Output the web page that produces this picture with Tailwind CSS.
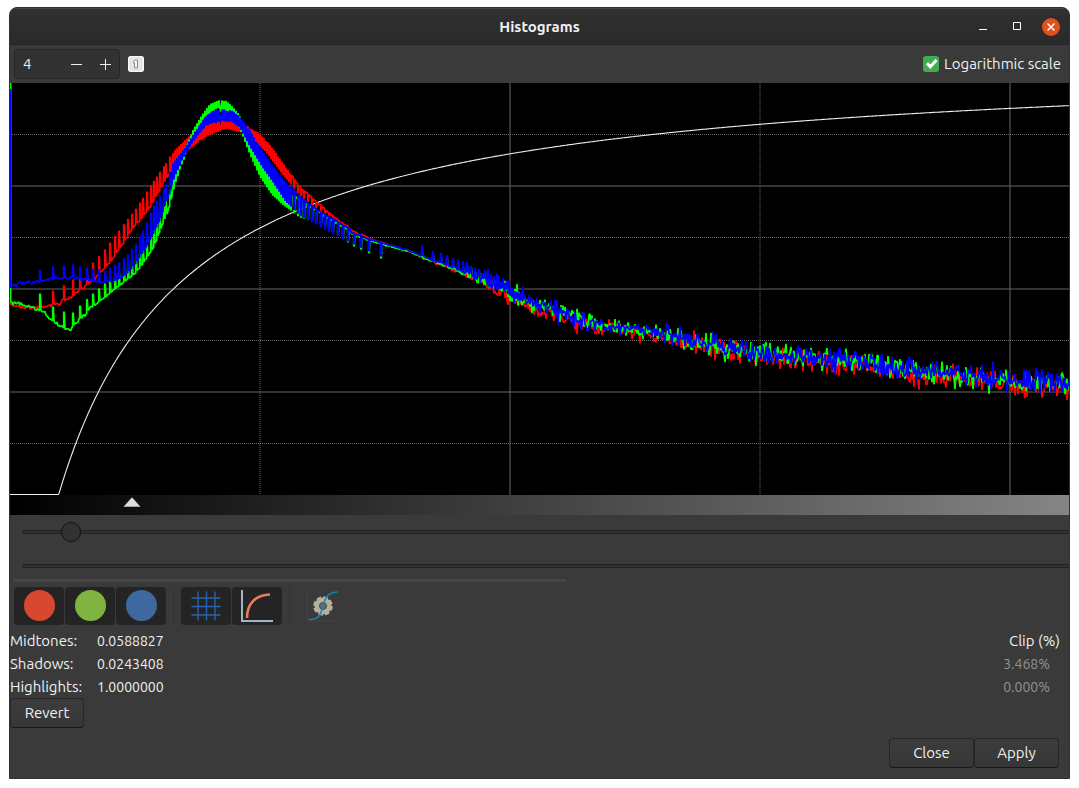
<!DOCTYPE html>
<html lang="en">
<head>
<meta charset="utf-8">
<meta name="viewport" content="width=device-width, initial-scale=1">
<title>Histograms</title>
<script src="https://cdn.jsdelivr.net/npm/@tailwindcss/browser@4"></script>
</head>
<body class="bg-white px-[9px] pt-[7px] pb-[9px] text-[15px] text-[#f0f0f0] font-['Ubuntu','Noto_Sans',sans-serif]">
<main class="flex min-h-[772px] flex-col overflow-hidden rounded-t-lg border border-[#303030] bg-[#3a3a3a]">
  <header class="grid h-[37px] shrink-0 grid-cols-[1fr_auto_1fr] items-center border-t border-b border-t-[#484848] border-b-[#232323] bg-linear-to-b from-[#303030] to-[#2a2a2a]">
    <h1 class="col-start-2 pt-0.5 font-bold">Histograms</h1>
    <div class="flex items-center justify-end gap-4 pr-[9px]">
      <button aria-label="Minimize" class="flex size-[18px] items-center justify-center"><svg class="size-4" viewBox="0 0 16 16"><path d="M4 10h8v1H4z" fill="#fff"/></svg></button>
      <button aria-label="Maximize" class="flex size-[18px] items-center justify-center"><svg class="size-4" viewBox="0 0 16 16" fill="none" stroke="#fff"><path d="M4.500 3.500h7v7h-7z"/></svg></button>
      <button aria-label="Close window" class="flex size-[18px] items-center justify-center rounded-full bg-[#e2501e]"><svg class="size-4" viewBox="0 0 16 16" fill="none" stroke="#fff" stroke-width="1.500"><path d="M4.500 4.500l7 7m0-7l-7 7"/></svg></button>
    </div>
  </header>

  <div class="flex h-[38px] shrink-0 items-center justify-between pr-2 pl-1">
    <div class="flex items-center gap-2">
      <div class="flex h-[30px] overflow-hidden rounded border border-[#272727] bg-[#323232]">
        <input aria-label="Zoom" value="4" class="w-[46px] bg-transparent pl-2 outline-none">
        <button aria-label="Zoom out" class="flex w-[29px] items-center justify-center border-l border-[#2d2d2d]"><svg class="h-3 w-[11px]" viewBox="0 0 11 12"><path d="M0 6h11v1H0z" fill="#eee"/></svg></button>
        <button aria-label="Zoom in" class="flex w-[29px] items-center justify-center border-l border-[#2d2d2d]"><svg class="h-3 w-[11px]" viewBox="0 0 11 12"><path d="M0 6h11v1H0zM5 1h1v11H5z" fill="#eee"/></svg></button>
      </div>
      <button aria-label="Reset zoom" class="size-4 rounded-[3px] bg-[#e4e4e2]"><svg class="size-4" viewBox="0 0 16 16"><rect x=".5" y=".5" width="15" height="15" rx="2.500" fill="#e6e6e4" stroke="#fafafa"/><path d="M5.500 5.500l1.500-1.500h2.500v8h-3v-5h-1z" fill="#f4f4f2" stroke="#8b8b88"/></svg></button>
    </div>
    <label class="flex items-center gap-[5px]">
      <span class="grid size-4">
        <input type="checkbox" checked class="col-start-1 row-start-1 size-4 appearance-none rounded-[3px] bg-[#3fae4f]">
        <svg class="pointer-events-none col-start-1 row-start-1 size-4" viewBox="0 0 16 16" fill="none" stroke="#fff" stroke-width="3"><path d="M4 7.200l3.300 3.600L13.500 4"/></svg>
      </span>
      Logarithmic scale
    </label>
  </div>

  <svg class="block h-[412px] w-full shrink-0 bg-black" viewBox="0 0 1059 412" preserveAspectRatio="none" role="img" aria-label="RGB histogram with the transfer curve" fill="none">
    <path stroke="#666" d="M500 0V412M1000 0V412M0 103H1059M0 206H1059M0 309H1059"/>
    <path stroke="#6a6a6a" stroke-dasharray="1 1" d="M250 0V412M750 0V412"/>
    <path stroke="#6a6a6a" stroke-dasharray="1 1" d="M0 51.500H1059M0 154.500H1059M0 257.500H1059M0 360.500H1059"/>
    <path id="transfer" stroke="#f0f0f0" stroke-width="1.100"/>
    <path id="red" stroke="#f00" stroke-width="1.700" stroke-linejoin="bevel"/>
    <path id="green" stroke="#0f0" stroke-width="1.700" stroke-linejoin="bevel"/>
    <path id="blue" stroke="#00f" stroke-width="1.700" stroke-linejoin="bevel"/>
  </svg>

  <div class="h-5 w-full shrink-0 bg-linear-to-r/srgb from-black to-[#858585] pl-[113px]">
    <svg class="h-[14px] w-[18px]" viewBox="0 0 18 14"><path d="M9 2l9 10H0z" fill="#dedede" stroke="#111" stroke-width=".6"/></svg>
  </div>

  <div class="flex shrink-0 flex-col overflow-hidden pl-3">
    <input type="range" aria-label="Shadows" min="0" max="1" step="any" value="0.0195" class="h-[34px] w-[190%] appearance-none bg-transparent [&::-webkit-slider-runnable-track]:h-1 [&::-webkit-slider-runnable-track]:rounded-sm [&::-webkit-slider-runnable-track]:border [&::-webkit-slider-runnable-track]:border-[#232323] [&::-webkit-slider-runnable-track]:bg-[#303030] [&::-webkit-slider-thumb]:-mt-[9px] [&::-webkit-slider-thumb]:size-5 [&::-webkit-slider-thumb]:appearance-none [&::-webkit-slider-thumb]:rounded-full [&::-webkit-slider-thumb]:border [&::-webkit-slider-thumb]:border-[#101010] [&::-webkit-slider-thumb]:bg-[#323232]">
    <input type="range" aria-label="Highlights" min="0" max="1" step="any" value="1" class="h-[34px] w-[190%] appearance-none bg-transparent [&::-webkit-slider-runnable-track]:h-1 [&::-webkit-slider-runnable-track]:rounded-sm [&::-webkit-slider-runnable-track]:border [&::-webkit-slider-runnable-track]:border-[#232323] [&::-webkit-slider-runnable-track]:bg-[#303030] [&::-webkit-slider-thumb]:-mt-[9px] [&::-webkit-slider-thumb]:size-5 [&::-webkit-slider-thumb]:appearance-none [&::-webkit-slider-thumb]:rounded-full [&::-webkit-slider-thumb]:bg-[#323232]">
  </div>
  <div class="-mt-1 ml-[3px] h-[3px] w-[52.200%] shrink-0 rounded-full bg-[#474747]"></div>

  <div class="mt-1 ml-1 flex h-[39px] shrink-0 items-center gap-px">
    <button aria-label="Red channel" aria-pressed="true" class="flex h-[38px] w-[50px] items-center justify-center rounded bg-[#242424]"><span class="size-[31px] rounded-full bg-[#d8472f]"></span></button>
    <button aria-label="Green channel" aria-pressed="true" class="flex h-[38px] w-[50px] items-center justify-center rounded bg-[#242424]"><span class="size-[31px] rounded-full bg-[#80b441]"></span></button>
    <button aria-label="Blue channel" aria-pressed="true" class="flex h-[38px] w-[50px] items-center justify-center rounded bg-[#242424]"><span class="size-[31px] rounded-full bg-[#3f689f]"></span></button>
    <span class="mx-[6px] h-[38px] w-px bg-[#333]"></span>
    <button aria-label="Show grid" aria-pressed="true" class="flex h-[38px] w-[50px] items-center justify-center rounded bg-[#242424]"><svg class="size-8" viewBox="0 0 32 32" fill="none" stroke="#2763ae" stroke-width="1.400" stroke-linecap="round"><path d="M8 2v28M16.500 2v28M25 2v28M2 8h28M2 16.500h28M2 25h28"/></svg></button>
    <button aria-label="Show curve" aria-pressed="true" class="flex h-[38px] w-[50px] items-center justify-center rounded bg-[#242424]"><svg class="size-8" viewBox="0 0 32 32" fill="none"><path d="M1 0v31H32" stroke="#9db7c4" stroke-width="2"/><path d="M6 28C6 13 15 5 29 4.500" stroke="#ee7a5c" stroke-width="2.600"/></svg></button>
    <span class="mx-[6px] h-[38px] w-px bg-[#333]"></span>
    <button aria-label="Auto stretch" class="flex h-[38px] w-[52px] items-center justify-center rounded"><svg class="size-8" viewBox="0 0 32 32" fill="none"><path d="M.5 0v31H32" stroke="#444"/><circle cx="16" cy="16" r="8.500" fill="#b5b09b"/><circle cx="16" cy="16" r="8.500" stroke="#b5b09b" stroke-width="2.600" stroke-dasharray="4.600 2.075"/><circle cx="16" cy="16" r="3.500" fill="#6d6b60" stroke="#4b4a44"/><path d="M2 29.500C11 29.500 13.500 26 15.500 18S19 2.500 30.500 2" stroke="#1286b5" stroke-width="1.500"/></svg></button>
  </div>

  <table class="mt-1 w-full shrink-0 border-collapse text-left leading-[23px]">
    <tbody>
      <tr><th class="w-[87px] p-0 font-normal"><label for="mid">Midtones:</label></th><td class="p-0"><input id="mid" value="0.0588827" class="block h-[23px] w-24 bg-transparent text-sm outline-none"></td><th class="p-0 pr-[9px] text-right font-normal">Clip (%)</th></tr>
      <tr><th class="p-0 font-normal"><label for="shadow">Shadows:</label></th><td class="p-0"><input id="shadow" value="0.0243408" class="block h-[23px] w-24 bg-transparent text-sm outline-none"></td><td class="p-0 pr-[19px] text-right text-sm text-[#929292]">3.468%</td></tr>
      <tr><th class="p-0 font-normal"><label for="high">Highlights:</label></th><td class="p-0"><input id="high" value="1.0000000" class="block h-[23px] w-24 bg-transparent text-sm outline-none"></td><td class="p-0 pr-[19px] text-right text-sm text-[#929292]">0.000%</td></tr>
    </tbody>
  </table>
  <div><button class="h-[30px] w-[74px] rounded border border-[#272727] border-b-[#181818] bg-linear-to-b from-[#3c3c3c] to-[#373737]">Revert</button></div>
  <footer class="mt-auto flex justify-end pr-[10px] pb-[10px]">
    <button class="h-[30px] w-[85px] rounded border border-[#272727] border-b-[#181818] bg-linear-to-b from-[#3c3c3c] to-[#373737]">Close</button>
    <button class="h-[30px] w-[85px] rounded border border-[#272727] border-b-[#181818] bg-linear-to-b from-[#3c3c3c] to-[#373737]">Apply</button>
  </footer>
</main>
<script>
// Visible part of the histogram: 1059 of 2000 units, 412 units high.
const shadows = 0.0243408, midtones = 0.0588827;
let curve = 'M0 411.500';
for (let x = 0; x <= 1059; x++) {
  const v = Math.max(0, (x / 2000 - shadows) / (1 - shadows));
  const y = (midtones - 1) * v / ((2 * midtones - 1) * v - midtones);
  curve += 'L' + x + ' ' + (411.5 * (1 - y)).toFixed(1);
}
document.getElementById('transfer').setAttribute('d', curve);

let seed = 7;
const rnd = () => (seed = (seed * 16807) % 2147483647) / 2147483647;
const at = (p, x) => {
  let i = 0;
  while (i < p.length - 4 && p[i + 2] < x) i += 2;
  const t = Math.min(1, Math.max(0, (x - p[i]) / (p[i + 2] - p[i])));
  return p[i + 1] + t * (p[i + 3] - p[i + 1]);
};
// Comb positions, sparse near 0 and 390, dense in between.
const comb = new Set([30,43,54,63,70,77,83,89,95,100,105,109,114,118,122,126,130,133,137,141,144,147,150,154,156,160,163,165,
  281,284,288,291,294,298,302,306,311,315,319,323,328,333,338,344,351,359,371,412,423,431,437,443,448,453,457,461,465,469,472,475,478,481,484,487]);
for (let x = 167; x < 281; x += 2) comb.add(x);
for (let x = 489; x < 560; x += 2) comb.add(x);

const tail = [340,149,360,157,380,163,400,169,420,177,440,184,460,192,480,202,500,213,520,222,540,229,560,235,580,240,600,243,620,246,640,249,660,252,680,257,700,261,720,265,740,268,760,270,800,275,850,279,890,286,940,291,990,297,1030,300,1059,302];
const amp = [340,.5,400,1,450,2,500,7,560,11,590,9,620,7,660,11,720,12,780,12,900,13,1059,13];
const channels = {
  red: {
    base: [0,222,23,225,37,223,50,220,63,213,73,204,83,197,90,190,100,179,110,165,123,145,137,128,150,106,163,85,177,68,190,58,203,50,217,47],
    spike: [30,216,43,208,54,203,63,197,70,195,77,189,83,180,95,167,100,160,113,143,127,125,137,109,147,94,156,80,165,67,177,55,190,44,205,38,220,37],
    upper: [210,37,220,38,230,40,240,45,250,51,260,62,273,80,290,104,310,122,325,135,340,145],
    hang: [210,47,217,46,230,49,243,57,255,68,273,92,290,112,310,128,340,146],
    shift: [340,-2,375,-1,400,0,460,2,500,3,560,3,600,2,640,3,720,3,800,4,900,3,1059,3],
    rise: 2
  },
  green: {
    base: [0,219,10,221,23,225,33,229,40,235,50,244,60,246,70,236,80,226,90,218,105,206,115,198,125,190,137,175,143,165,150,148,157,131,163,109,170,87,177,68,185,50,195,35,205,26,212,25],
    spike: [30,211,43,224,54,229,63,230,70,223,83,211,95,201,110,188,122,178,127,173,137,162,143,150,150,135,156,118,160,107,165,90,175,66,183,47,192,32,200,21,210,17],
    upper: [210,17,218,19,228,30,240,54,250,72,260,92,273,107,290,117,310,130,340,148],
    hang: [210,28,222,36,230,46,240,72,250,94,262,112,273,122,290,134,310,140,325,150,344,163,371,175],
    shift: [340,1,400,0,460,1,500,0,560,-1,640,0,1059,0],
    rise: 7
  },
  blue: {
    base: [0,203,10,201,23,199,40,196,63,195,80,197,90,199,105,198,115,192,125,181,137,162,143,150,150,136,157,117,163,98,170,82,177,68,185,56,197,42,212,38],
    spike: [30,187,43,184,54,183,63,182,70,184,80,186,95,188,108,181,118,172,127,160,137,140,143,125,150,113,157,99,163,80,175,65,185,49,195,34,203,28,212,26],
    upper: [210,26,222,28,230,34,240,48,252,67,265,86,280,104,295,118,310,129,340,146],
    hang: [210,38,222,39,230,45,240,64,252,84,262,98,275,118,290,132,306,141,320,149,344,161,359,168,371,173],
    shift: [340,0,400,-1,460,-1,500,-1,560,0,1059,-1],
    rise: 9
  }
};
// Teeth rise from the base up to the peak, hang from the upper edge until x = 390, then rise again.
for (const name of ['red', 'green', 'blue']) {
  const c = channels[name];
  let d = 'M.5 ' + (name === 'blue' ? 6 : 0) + 'V' + (name === 'blue' ? 203 : 219);
  for (let x = 1; x <= 1059; x++) {
    const n = rnd() + rnd() - 1;
    const tooth = comb.has(x);
    let y;
    if (x <= 210) {
      y = tooth ? at(c.spike, x) : at(c.base, x) + n * (x < 90 ? 2.5 : 1);
    } else if (x < 390) {
      y = x > 340 ? at(tail, x) + at(c.shift, x) : at(c.upper, x);
      if (tooth && !(name === 'red' && x > 340)) y = at(c.hang, x);
      else y += n;
    } else {
      y = at(tail, x) + at(c.shift, x) + n * at(amp, x) * (rnd() > .93 ? 1.5 : 1.1);
      if (tooth && x < 560) y -= c.rise * (x > 500 ? .8 : 1);
    }
    // Isolated teeth are two units wide with steep sides.
    const wide = tooth && !comb.has(x + 2) && !comb.has(x - 2);
    d += wide ? 'H' + (x - .3) + 'V' + y.toFixed(1) + 'H' + (x + .3) : 'L' + x + ' ' + y.toFixed(1);
  }
  document.getElementById(name).setAttribute('d', d);
}
</script>
</body>
</html>
